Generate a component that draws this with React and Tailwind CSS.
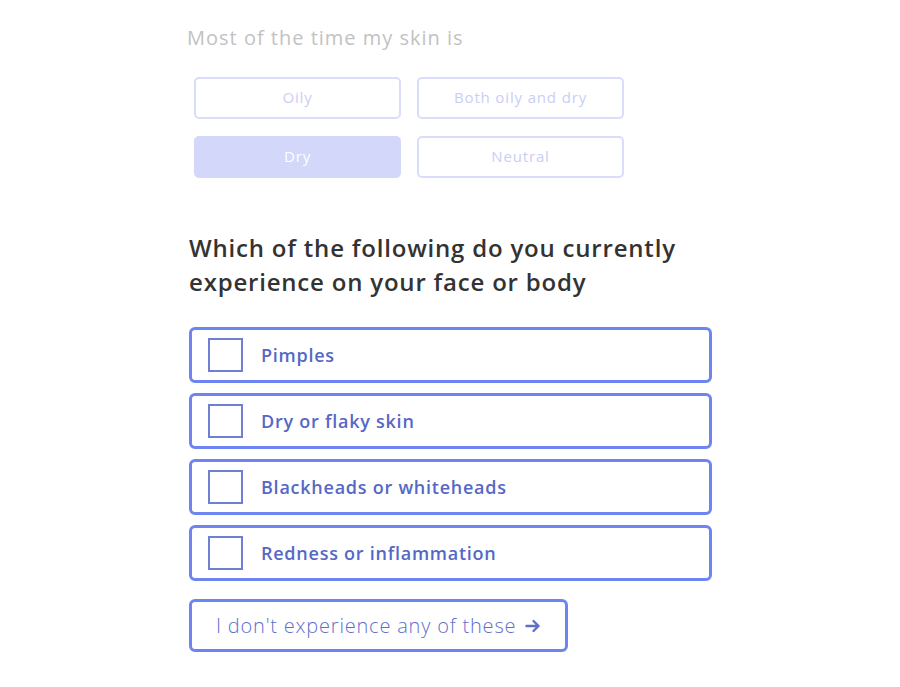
import React from "react";

const items = ["Pimples", "Dry or flaky skin", "Blackheads or whiteheads", "Redness or inflammation"];

export default function App() {
  return (
    <div className="w-[900px] h-[687px] bg-white overflow-hidden" style={{ fontFamily: "'Open Sans', Lato, sans-serif" }}>
      <div className="pl-[187px] pt-[25px]">
        <div className="text-[20px] leading-[26px] text-[#c2c2c2] tracking-[1px]">Most of the time my skin is</div>
        <div className="ml-[7px] mt-[26px] grid grid-cols-[207px_207px] gap-x-[16px] gap-y-[17px]">
          <div className="h-[42px] pb-[2px] rounded-[5px] border-2 border-[#d9ddfb] flex items-center justify-center text-[15px] text-[#c9cef6] tracking-[0.85px]">Oily</div>
          <div className="h-[42px] pb-[2px] rounded-[5px] border-2 border-[#d9ddfb] flex items-center justify-center text-[15px] text-[#c9cef6] tracking-[0.85px]">Both oily and dry</div>
          <div className="h-[42px] pb-[2px] rounded-[5px] border-2 border-[#d3d7fa] bg-[#d3d7fa] flex items-center justify-center text-[15px] text-white tracking-[0.85px]">Dry</div>
          <div className="h-[42px] pb-[2px] rounded-[5px] border-2 border-[#d9ddfb] flex items-center justify-center text-[15px] text-[#c9cef6] tracking-[0.85px]">Neutral</div>
        </div>
        <div className="ml-[2px] mt-[53px] text-[24px] leading-[34px] font-semibold text-[#333333] tracking-[0.8px]">
          Which of the following do you currently<br />experience on your face or body
        </div>
        <div className="ml-[2px] mt-[28px] w-[523px] flex flex-col gap-[10px]">
          {items.map((t) => (
            <div key={t} className="h-[56px] rounded-[6px] border-[3px] border-[#6d84f1] flex items-center pl-[16px]">
              <div className="w-[35px] h-[34px] border-2 border-[#6f80d2]" />
              <div className="ml-[18px] text-[18px] font-semibold text-[#5568c6] tracking-[0.75px]">{t}</div>
            </div>
          ))}
        </div>
        <div className="ml-[2px] mt-[18px] w-[379px] h-[53px] rounded-[6px] border-[3px] border-[#6d84f1] flex items-center pl-[24px]">
          <span className="text-[20px] font-light text-[#5e6fc8] tracking-[0.8px]">I don't experience any of these</span>
          <svg className="ml-[9px]" width="16" height="14" viewBox="0 0 16 14" fill="none" stroke="#5e6fc8" strokeWidth="2.4" strokeLinecap="round" strokeLinejoin="round">
            <path d="M1.5 7h12M8.5 2l5 5-5 5" />
          </svg>
        </div>
      </div>
    </div>
  );
}
